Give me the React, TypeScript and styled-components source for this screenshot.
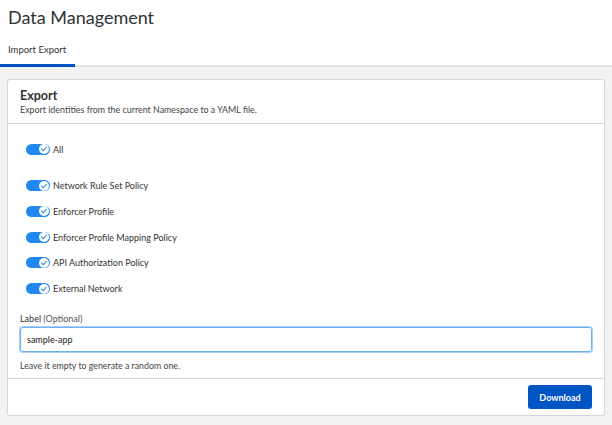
import React from "react";
import styled, { createGlobalStyle } from "styled-components";

const Global = createGlobalStyle`
  html, body { margin: 0; padding: 0; background: #fff; }
  body { font-family: Lato, "Open Sans", sans-serif; color: #333; }
  * { box-sizing: border-box; }
`;

const Page = styled.div`
  width: 612px;
  height: 425px;
  display: flex;
  flex-direction: column;
  background: #f1f2f3;
  overflow: hidden;
`;

const Top = styled.div`
  background: #fff;
  border-bottom: 2px solid #e2e3e5;
`;

const Title = styled.h1`
  margin: 0;
  padding: 5px 0 0 8px;
  font-size: 18px;
  font-weight: 400;
  color: #303236;
  height: 40px;
  line-height: 24px;
`;

const Tabs = styled.div`
  display: flex;
  margin-bottom: -2px;
`;

const Tab = styled.div<{ $active?: boolean }>`
  padding: 4px 8px 9px 8px;
  font-size: 9.5px;
  color: #333;
  border-bottom: 3px solid ${(p) => (p.$active ? "#0055c4" : "transparent")};
  width: 75px;
`;

const Body = styled.div`
  padding: 12px 7px 9px 7px;
  flex: 1;
  display: flex;
`;

const Card = styled.div`
  flex: 1;
  background: #fff;
  border: 1px solid #d4d5d7;
  border-radius: 3px;
  display: flex;
  flex-direction: column;
`;

const CardHeader = styled.div`
  padding: 8px 12px 7px 12px;
  border-bottom: 1px solid #d4d5d7;
`;

const CardTitle = styled.div`
  font-size: 12.5px;
  font-weight: 700;
  color: #333;
  line-height: 16px;
`;

const CardSub = styled.div`
  font-size: 8.9px;
  color: #444;
  line-height: 12px;
`;

const CardContent = styled.div`
  padding: 17px 12px 7px 12px;
  display: flex;
  flex-direction: column;
  border-bottom: 1px solid #d4d5d7;
`;

const ToggleRow = styled.label<{ $gap?: number }>`
  display: flex;
  align-items: center;
  gap: 3px;
  height: 16px;
  margin-bottom: ${(p) => p.$gap ?? 9.75}px;
  padding-left: 6px;
  font-size: 9px;
  color: #333;
`;

const Track = styled.span`
  position: relative;
  width: 24px;
  height: 11px;
  border-radius: 6px;
  background: #2188ef;
  flex: none;
`;

const Thumb = styled.span`
  position: absolute;
  right: 1px;
  top: 0.5px;
  width: 10px;
  height: 10px;
  border-radius: 50%;
  background: #fff;
  display: flex;
  align-items: center;
  justify-content: center;
`;

const Toggle = () => (
  <Track>
    <Thumb>
      <svg width="8" height="8" viewBox="0 0 10 10">
        <path d="M2.2 5.2 L4.2 7.2 L7.8 2.8" fill="none" stroke="#2188ef" strokeWidth="1.4" strokeLinecap="round" strokeLinejoin="round" />
      </svg>
    </Thumb>
  </Track>
);

const FieldLabel = styled.div`
  font-size: 9px;
  color: #333;
  margin-top: 7px;
  margin-bottom: 3px;
  span { color: #555; }
`;

const Input = styled.div`
  height: 25px;
  border: 1px solid #6fb1f0;
  box-shadow: 0 0 0 1px #a8d0f7;
  border-radius: 3px;
  padding: 0 6px;
  display: flex;
  align-items: center;
  font-size: 9px;
  color: #222;
`;

const Help = styled.div`
  font-size: 8.8px;
  color: #444;
  margin-top: 8px;
`;

const Footer = styled.div`
  flex: 1;
  display: flex;
  justify-content: flex-end;
  align-items: flex-start;
  padding: 6px 12px 0 0;
`;

const Button = styled.button`
  width: 64px;
  height: 24px;
  background: #0055c4;
  color: #fff;
  border: none;
  border-radius: 3px;
  font-family: Lato, sans-serif;
  font-size: 9px;
  font-weight: 700;
`;

const items = [
  "Network Rule Set Policy",
  "Enforcer Profile",
  "Enforcer Profile Mapping Policy",
  "API Authorization Policy",
  "External Network",
];

export default function App() {
  return (
    <Page>
      <Global />
      <Top>
        <Title>Data Management</Title>
        <Tabs>
          <Tab $active>Import Export</Tab>
        </Tabs>
      </Top>
      <Body>
        <Card>
          <CardHeader>
            <CardTitle>Export</CardTitle>
            <CardSub>Export identities from the current Namespace to a YAML file.</CardSub>
          </CardHeader>
          <CardContent>
            <ToggleRow $gap={20.5}>
              <Toggle />
              All
            </ToggleRow>
            {items.map((t) => (
              <ToggleRow key={t}>
                <Toggle />
                {t}
              </ToggleRow>
            ))}
            <FieldLabel>
              Label <span>(Optional)</span>
            </FieldLabel>
            <Input>sample-app</Input>
            <Help>Leave it empty to generate a random one.</Help>
          </CardContent>
          <Footer>
            <Button>Download</Button>
          </Footer>
        </Card>
      </Body>
    </Page>
  );
}
